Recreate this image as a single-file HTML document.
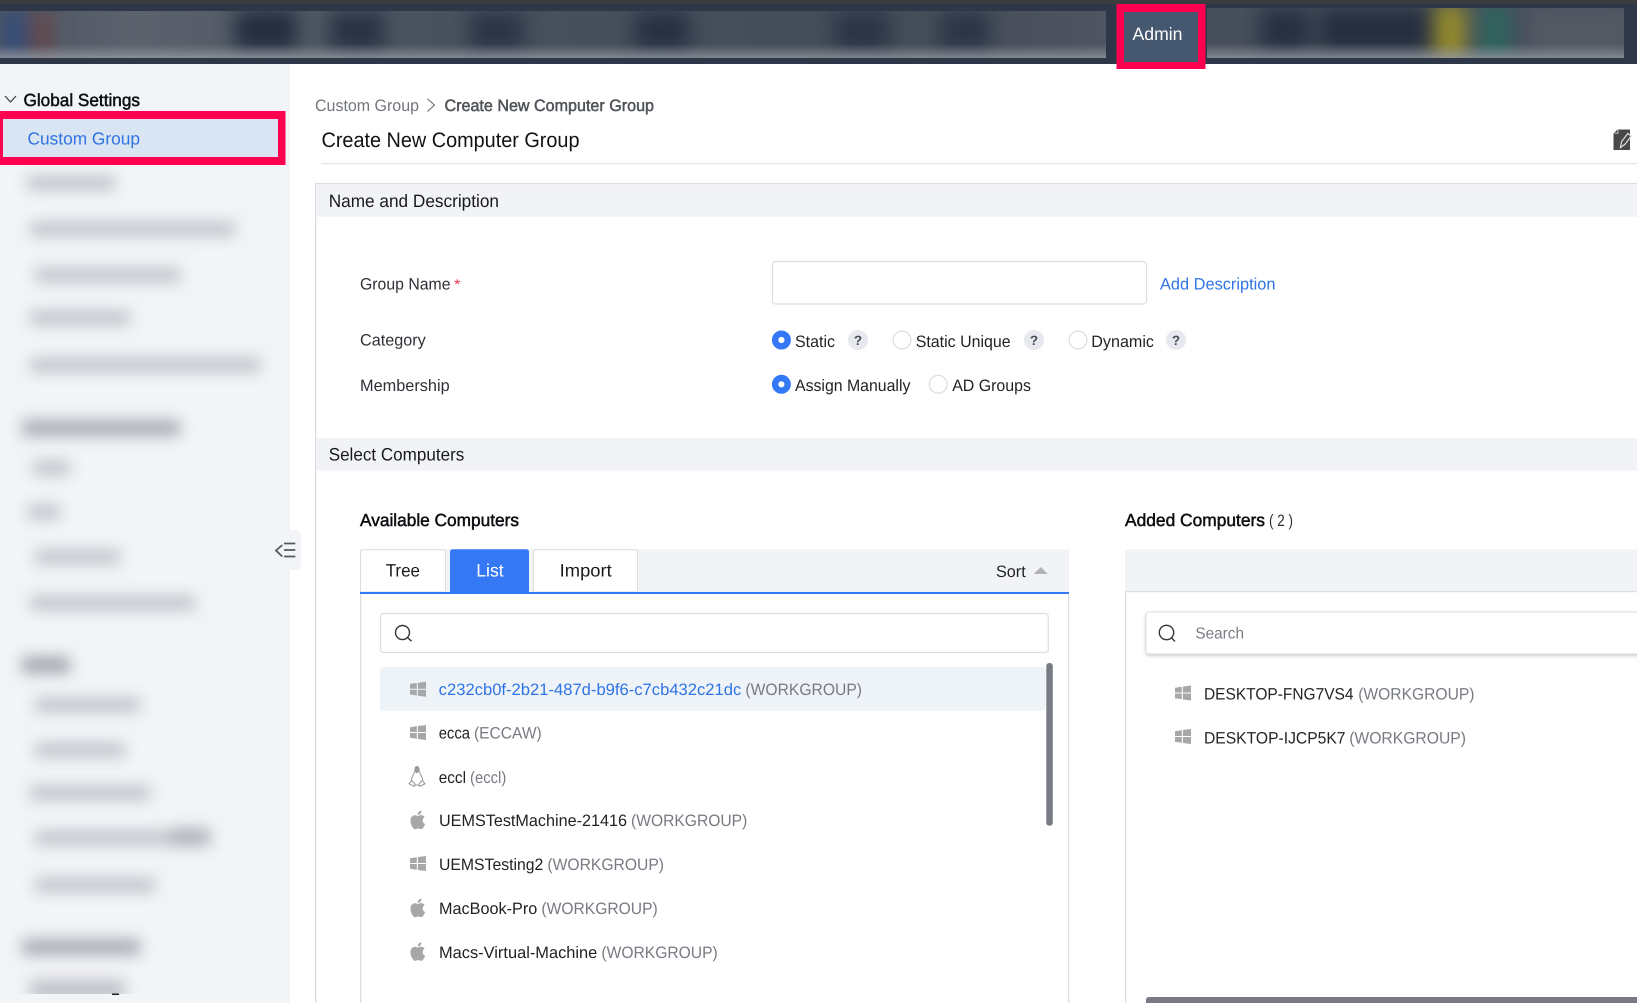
<!DOCTYPE html>
<html lang="en">
<head>
<meta charset="utf-8">
<title>Create New Computer Group</title>
<style>
html,body{margin:0;padding:0;width:1637px;height:1003px;overflow:hidden;background:#fff}
svg{display:block;position:absolute;left:0;top:0}
text{font-family:"Liberation Sans",sans-serif;text-rendering:geometricPrecision;white-space:pre}
.t{font-size:16.5px;fill:#1f2125}
.l{font-size:16.5px;fill:#2e3136}
.g{font-size:16.5px;fill:#777a82}
.h{font-size:18px;fill:#17191c}
.b{font-size:17.5px;fill:#0c0e12;stroke:#0c0e12;stroke-width:.5px}
.q{font-size:13.5px;fill:#4a4d53;text-anchor:middle;font-weight:bold}
</style>
</head>
<body>
<svg width="1637" height="1003" viewBox="0 0 1637 1003" xmlns="http://www.w3.org/2000/svg">
<defs>
<filter id="b6" filterUnits="userSpaceOnUse" x="-40" y="120" width="400" height="940" color-interpolation-filters="sRGB"><feGaussianBlur stdDeviation="7.5"/></filter>
<filter id="b8" filterUnits="userSpaceOnUse" x="-40" y="-40" width="1720" height="150" color-interpolation-filters="sRGB"><feGaussianBlur stdDeviation="10"/></filter>
<filter id="sh" x="-5%" y="-30%" width="110%" height="170%"><feDropShadow dx="0" dy="1.5" stdDeviation="1.5" flood-color="#000" flood-opacity=".2"/></filter>
<clipPath id="c1"><rect x="0" y="11" width="1106" height="47"/></clipPath>
<clipPath id="c2"><rect x="1207" y="8" width="417" height="50"/></clipPath>
<clipPath id="c3"><rect x="0" y="166" width="290" height="828"/></clipPath>
<linearGradient id="fade" x1="0" y1="0" x2="0" y2="1"><stop offset=".7" stop-color="#9aa0a8" stop-opacity="0"/><stop offset="1" stop-color="#a5a9b0" stop-opacity=".62"/></linearGradient>
<linearGradient id="base1" x1="0" y1="0" x2="1" y2="0"><stop offset="0" stop-color="#4c5563"/><stop offset=".12" stop-color="#5b626d"/><stop offset=".4" stop-color="#48515e"/><stop offset=".8" stop-color="#434c58"/><stop offset="1" stop-color="#4e5460"/></linearGradient>
<g id="win" fill="#a6a7a9"><path d="M0 2.2 6.8 1.2V7H0Z"/><path d="M7.9 1 16 0V7H7.9Z"/><path d="M0 8H6.8V13.8L0 12.8Z"/><path d="M7.9 8H16V15L7.9 14Z"/></g>
<path id="apple" fill="#a6a7a9" d="M18.71 19.5c-.83 1.24-1.71 2.45-3.05 2.47-1.34.03-1.77-.79-3.29-.79-1.53 0-2 .77-3.27.82-1.31.05-2.3-1.32-3.14-2.53C4.25 17 2.94 12.45 4.7 9.39c.87-1.52 2.43-2.48 4.12-2.51 1.28-.02 2.5.87 3.29.87.78 0 2.26-1.07 3.81-.91.65.03 2.47.26 3.64 1.98-.09.06-2.17 1.28-2.15 3.81.03 3.02 2.65 4.03 2.68 4.04-.03.07-.42 1.44-1.38 2.83M13 3.5c.73-.83 1.94-1.46 2.94-1.5.13 1.17-.34 2.35-1.04 3.19-.69.85-1.83 1.51-2.95 1.42-.15-1.15.41-2.35 1.05-3.11z"/>
</defs>

<!-- top bar -->
<rect x="0" y="0" width="1637" height="64" fill="#2e3747"/>
<rect x="0" y="0" width="1637" height="3.5" fill="#3d3d3d"/>
<g clip-path="url(#c1)">
<rect x="0" y="11" width="1106" height="47" fill="url(#base1)"/>
<g filter="url(#b8)">
<rect x="6" y="10" width="20" height="46" fill="#2f4c80"/>
<rect x="32" y="10" width="18" height="46" fill="#6c4646"/>
<rect x="235" y="10" width="62" height="40" fill="#222c3e"/>
<rect x="330" y="12" width="54" height="38" fill="#283143"/>
<rect x="470" y="12" width="54" height="38" fill="#2b3445"/>
<rect x="635" y="12" width="54" height="38" fill="#253042"/>
<rect x="835" y="12" width="54" height="38" fill="#2b3446"/>
<rect x="940" y="12" width="50" height="38" fill="#2b3446"/>
</g>
<rect x="0" y="11" width="1106" height="47" fill="url(#fade)"/>
</g>
<g clip-path="url(#c2)">
<rect x="1207" y="8" width="417" height="50" fill="#474f5c"/>
<g filter="url(#b8)">
<rect x="1260" y="8" width="50" height="44" fill="#263042"/>
<rect x="1320" y="8" width="112" height="44" fill="#252e3f"/>
<rect x="1434" y="4" width="32" height="58" fill="#968c2c"/>
<rect x="1480" y="4" width="30" height="58" fill="#2e655f"/>
<rect x="1530" y="6" width="100" height="50" fill="#545964"/>
</g>
<rect x="1207" y="8" width="417" height="50" fill="url(#fade)"/>
</g>
<rect x="1116.5" y="4" width="89" height="65" fill="#ff0050"/>
<rect x="1124" y="12" width="74" height="50" fill="#46586f"/>
<text x="1132.5" y="40" font-size="18" fill="#fff" textLength="50" lengthAdjust="spacingAndGlyphs">Admin</text>

<!-- sidebar -->
<rect x="0" y="64" width="290" height="939" fill="#f2f4f8"/>
<g clip-path="url(#c3)">
<g filter="url(#b6)" fill="#bfc1c8">
<rect x="27" y="176" width="88" height="14"/>
<rect x="30" y="222" width="205" height="14"/>
<rect x="35" y="268" width="145" height="14"/>
<rect x="30" y="311" width="100" height="14"/>
<rect x="30" y="358" width="230" height="14"/>
<rect x="22" y="420" width="158" height="16" fill="#a8aab2"/>
<rect x="33" y="461" width="37" height="14"/>
<rect x="28" y="505" width="32" height="14"/>
<rect x="35" y="550" width="85" height="14"/>
<rect x="30" y="596" width="165" height="14"/>
<rect x="22" y="657" width="48" height="16" fill="#a0a2aa"/>
<rect x="35" y="698" width="105" height="14"/>
<rect x="35" y="743" width="90" height="14"/>
<rect x="30" y="786" width="120" height="14"/>
<rect x="35" y="831" width="175" height="14"/>
<rect x="170" y="828" width="40" height="18" fill="#b0b2b9"/>
<rect x="35" y="878" width="120" height="14"/>
<rect x="22" y="939" width="118" height="16" fill="#a8aab2"/>
<rect x="30" y="980" width="95" height="20"/>
</g>
</g>
<rect x="112" y="993.5" width="7" height="1.5" fill="#1c1f26"/>
<path d="M5 96 10.5 102 16 96" fill="none" stroke="#3a3d42" stroke-width="1.2"/>
<text x="23.5" y="106" class="b" textLength="116.5" lengthAdjust="spacingAndGlyphs">Global Settings</text>
<rect x="0" y="111" width="285.5" height="54" fill="#ff0050"/>
<rect x="3" y="119" width="275" height="38" fill="#d9e5f2"/>
<text x="27.5" y="144.7" font-size="17.5" fill="#2f72e2" textLength="112.5" lengthAdjust="spacingAndGlyphs">Custom Group</text>
<rect x="271" y="530" width="30" height="40" rx="5" fill="#f2f4f8"/>
<path d="M282.3 545 276 550.5 282.3 556.5" fill="none" stroke="#55585e" stroke-width="1.8"/>
<path d="M284 543.5H295.3M284 550H295.3M284 556.5H295.3" fill="none" stroke="#55585e" stroke-width="1.8"/>

<!-- breadcrumb + title -->
<text x="315" y="111" font-size="16.5" fill="#72767d" textLength="104" lengthAdjust="spacingAndGlyphs">Custom Group</text>
<path d="M427.5 99 434.5 105 427.5 111.5" fill="none" stroke="#6b6e74" stroke-width="1.1"/>
<text x="444.5" y="111" font-size="16.5" fill="#50545a" stroke="#50545a" stroke-width=".5" textLength="209.5" lengthAdjust="spacingAndGlyphs">Create New Computer Group</text>
<text x="321.5" y="147" font-size="21" fill="#111215" textLength="258" lengthAdjust="spacingAndGlyphs">Create New Computer Group</text>
<path d="M1613.5 133.5 1617.5 129.5H1630V150H1613.5Z" fill="#474849"/>
<path d="M1614.5 133.2H1618V129.8" fill="none" stroke="#d8d8d8" stroke-width=".9"/>
<path d="M1620.5 147.5 1621.5 141.8 1627.8 133.5 1631.2 136 1625 144.3Z" fill="#474849" stroke="#dedede" stroke-width="1.2"/>
<rect x="321" y="163" width="1316" height="1.2" fill="#e3e3e5"/>

<!-- sections -->
<rect x="315" y="183" width="1322" height="1.3" fill="#dcdde1"/>
<rect x="315" y="183" width="1.3" height="820" fill="#dcdde1"/>
<rect x="316.3" y="184.3" width="1321" height="32.5" fill="#f2f3f7"/>
<text x="328.7" y="206.8" class="h" textLength="170.3" lengthAdjust="spacingAndGlyphs">Name and Description</text>
<rect x="316.3" y="438" width="1321" height="32.6" fill="#f2f3f7"/>
<text x="328.7" y="460.7" class="h" textLength="135.6" lengthAdjust="spacingAndGlyphs">Select Computers</text>

<!-- form -->
<text x="360" y="289.7" class="l" textLength="90.5" lengthAdjust="spacingAndGlyphs">Group Name</text>
<text x="454" y="289" font-size="14" fill="#f0324a" textLength="6.5" lengthAdjust="spacingAndGlyphs">*</text>
<text x="360" y="345.7" class="l" textLength="65.7" lengthAdjust="spacingAndGlyphs">Category</text>
<text x="360" y="391" class="l" textLength="89.7" lengthAdjust="spacingAndGlyphs">Membership</text>
<rect x="772.5" y="261.5" width="374" height="42.5" rx="3" fill="#fff" stroke="#dcdde1" stroke-width="1.2"/>
<text x="1160" y="289.7" font-size="16.5" fill="#2f74e6" textLength="115.5" lengthAdjust="spacingAndGlyphs">Add Description</text>

<circle cx="781.4" cy="340" r="6.3" fill="#fff" stroke="#3478f6" stroke-width="6.4"/>
<text x="795" y="347" class="t" textLength="40" lengthAdjust="spacingAndGlyphs">Static</text>
<circle cx="858" cy="340" r="10" fill="#e8e9ee"/><text x="858" y="345" class="q">?</text>
<circle cx="902" cy="340" r="8.9" fill="#fff" stroke="#dcdde1" stroke-width="1.2"/>
<text x="915.7" y="347" class="t" textLength="95" lengthAdjust="spacingAndGlyphs">Static Unique</text>
<circle cx="1034" cy="340" r="10" fill="#e8e9ee"/><text x="1034" y="345" class="q">?</text>
<circle cx="1078" cy="340" r="8.9" fill="#fff" stroke="#dcdde1" stroke-width="1.2"/>
<text x="1091.3" y="347" class="t" textLength="62.7" lengthAdjust="spacingAndGlyphs">Dynamic</text>
<circle cx="1176" cy="340" r="10" fill="#e8e9ee"/><text x="1176" y="345" class="q">?</text>

<circle cx="781.4" cy="384.3" r="6.3" fill="#fff" stroke="#3478f6" stroke-width="6.4"/>
<text x="795" y="391" class="t" textLength="115.4" lengthAdjust="spacingAndGlyphs">Assign Manually</text>
<circle cx="938.2" cy="384.3" r="8.9" fill="#fff" stroke="#dcdde1" stroke-width="1.2"/>
<text x="952.2" y="391" class="t" textLength="78.8" lengthAdjust="spacingAndGlyphs">AD Groups</text>

<!-- available computers -->
<text x="360" y="526" class="b" textLength="159" lengthAdjust="spacingAndGlyphs">Available Computers</text>
<rect x="360" y="549.3" width="709" height="43" fill="#f2f3f7"/>
<path d="M360.5 592V552Q360.5 549.8 363 549.8H443Q445.5 549.8 445.5 552V592Z" fill="#fff" stroke="#dcdde1"/>
<path d="M450 592V552Q450 549.3 453 549.3H526Q529 549.3 529 552V592Z" fill="#3478f6"/>
<path d="M533.5 592V552Q533.5 549.8 536 549.8H635Q637.5 549.8 637.5 552V592Z" fill="#fff" stroke="#dcdde1"/>
<text x="385.7" y="576.7" class="h" textLength="34.3" lengthAdjust="spacingAndGlyphs">Tree</text>
<text x="476.2" y="576.7" font-size="18" fill="#fff" textLength="27.5" lengthAdjust="spacingAndGlyphs">List</text>
<text x="559.7" y="576.7" class="h" textLength="52" lengthAdjust="spacingAndGlyphs">Import</text>
<text x="996" y="577" class="t" textLength="29.7" lengthAdjust="spacingAndGlyphs">Sort</text>
<path d="M1033.7 574 1040.8 567 1047.8 574Z" fill="#b0b2b6"/>
<rect x="360" y="592" width="709" height="2" fill="#3478f6"/>
<rect x="360" y="594" width="1.2" height="409" fill="#dcdde1"/>
<rect x="1068" y="594" width="1.2" height="409" fill="#dcdde1"/>
<rect x="380.5" y="613.5" width="667.8" height="39" rx="3" fill="#fff" stroke="#dcdde1" stroke-width="1.2"/>
<circle cx="402.5" cy="632.5" r="7" fill="none" stroke="#33363b" stroke-width="1.4"/>
<path d="M407.5 637.5 411.5 641.2" stroke="#33363b" stroke-width="1.4"/>
<rect x="380" y="667" width="666" height="43.7" rx="3" fill="#eef3f8"/>
<rect x="1046.3" y="663" width="6.5" height="162.7" rx="3" fill="#787b84"/>

<use href="#win" x="410" y="681.7"/>
<text x="438.7" y="694.8" font-size="16.5" fill="#2f74e6" textLength="302.6" lengthAdjust="spacingAndGlyphs">c232cb0f-2b21-487d-b9f6-c7cb432c21dc</text>
<text x="745.4" y="694.8" class="g" textLength="116.6" lengthAdjust="spacingAndGlyphs">(WORKGROUP)</text>

<use href="#win" x="410" y="725"/>
<text x="438.7" y="738.5" class="t" textLength="31.3" lengthAdjust="spacingAndGlyphs">ecca</text>
<text x="474" y="738.5" class="g" textLength="67.7" lengthAdjust="spacingAndGlyphs">(ECCAW)</text>

<g transform="translate(408.5 766)">
<path d="M6 5.5C6 8 2.8 10.5 2.8 14.5 2.8 16 3.4 17.5 4.5 18.3M11 5.5C11 8 14.2 10.5 14.2 14.5 14.2 16 13.6 17.5 12.5 18.3M6 19.4C7.5 19 9.5 19 11 19.4" fill="none" stroke="#a3a4a6" stroke-width="1.1"/>
<path d="M8.5 0C6 0 5.8 2.8 5.8 5.6L8.5 7.4 11.2 5.6C11.2 2.8 11 0 8.5 0Z" fill="#999a9c"/>
<path d="M3.4 14.5 .4 17.8 5.8 20.4 6.6 18.2Z" fill="#fff" stroke="#9a9b9d" stroke-width="1.1" stroke-linejoin="round"/>
<path d="M13.6 14.5 16.6 17.8 11.2 20.4 10.4 18.2Z" fill="#fff" stroke="#9a9b9d" stroke-width="1.1" stroke-linejoin="round"/>
</g>
<text x="438.7" y="783" class="t" textLength="27.3" lengthAdjust="spacingAndGlyphs">eccl</text>
<text x="470" y="783" class="g" textLength="36.3" lengthAdjust="spacingAndGlyphs">(eccl)</text>

<use href="#apple" transform="translate(407 808.8) scale(.9 .93)"/>
<text x="439" y="826.2" class="t" textLength="188" lengthAdjust="spacingAndGlyphs">UEMSTestMachine-21416</text>
<text x="631" y="826.2" class="g" textLength="116.3" lengthAdjust="spacingAndGlyphs">(WORKGROUP)</text>

<use href="#win" x="410" y="856"/>
<text x="439" y="870" class="t" textLength="104.3" lengthAdjust="spacingAndGlyphs">UEMSTesting2</text>
<text x="547.4" y="870" class="g" textLength="116.6" lengthAdjust="spacingAndGlyphs">(WORKGROUP)</text>

<use href="#apple" transform="translate(407 896.8) scale(.9 .93)"/>
<text x="439" y="914" class="t" textLength="98.3" lengthAdjust="spacingAndGlyphs">MacBook-Pro</text>
<text x="541.4" y="914" class="g" textLength="116.3" lengthAdjust="spacingAndGlyphs">(WORKGROUP)</text>

<use href="#apple" transform="translate(407 940.4) scale(.9 .93)"/>
<text x="439" y="958" class="t" textLength="158.3" lengthAdjust="spacingAndGlyphs">Macs-Virtual-Machine</text>
<text x="601.4" y="958" class="g" textLength="116.3" lengthAdjust="spacingAndGlyphs">(WORKGROUP)</text>

<!-- added computers -->
<text x="1125" y="526" class="b" textLength="140" lengthAdjust="spacingAndGlyphs">Added Computers</text>
<text x="1269" y="526" class="l" textLength="24" lengthAdjust="spacingAndGlyphs">( 2 )</text>
<rect x="1125" y="549.3" width="512" height="41.7" fill="#f2f3f7"/>
<rect x="1125" y="591" width="512" height="1.2" fill="#dcdde1"/>
<rect x="1125" y="592" width="1.2" height="411" fill="#dcdde1"/>
<rect x="1146" y="612" width="520" height="42" rx="3" fill="#fff" stroke="#dcdde1" filter="url(#sh)"/>
<circle cx="1166.5" cy="632.5" r="7.2" fill="none" stroke="#33363b" stroke-width="1.4"/>
<path d="M1171.5 637.8 1175 641.5" stroke="#33363b" stroke-width="1.4"/>
<text x="1195.4" y="638.7" font-size="16" fill="#7b7e86" textLength="48.6" lengthAdjust="spacingAndGlyphs">Search</text>

<use href="#win" x="1175" y="685.5"/>
<text x="1204" y="699.7" class="t" textLength="149.5" lengthAdjust="spacingAndGlyphs">DESKTOP-FNG7VS4</text>
<text x="1358.2" y="699.7" class="g" textLength="116.3" lengthAdjust="spacingAndGlyphs">(WORKGROUP)</text>

<use href="#win" x="1175" y="729"/>
<text x="1204" y="743.7" class="t" textLength="141.5" lengthAdjust="spacingAndGlyphs">DESKTOP-IJCP5K7</text>
<text x="1349.2" y="743.7" class="g" textLength="116.8" lengthAdjust="spacingAndGlyphs">(WORKGROUP)</text>

<path d="M1149 997H1637V1003H1146V1000Q1146 997 1149 997Z" fill="#787b84"/>
</svg>
</body>
</html>
